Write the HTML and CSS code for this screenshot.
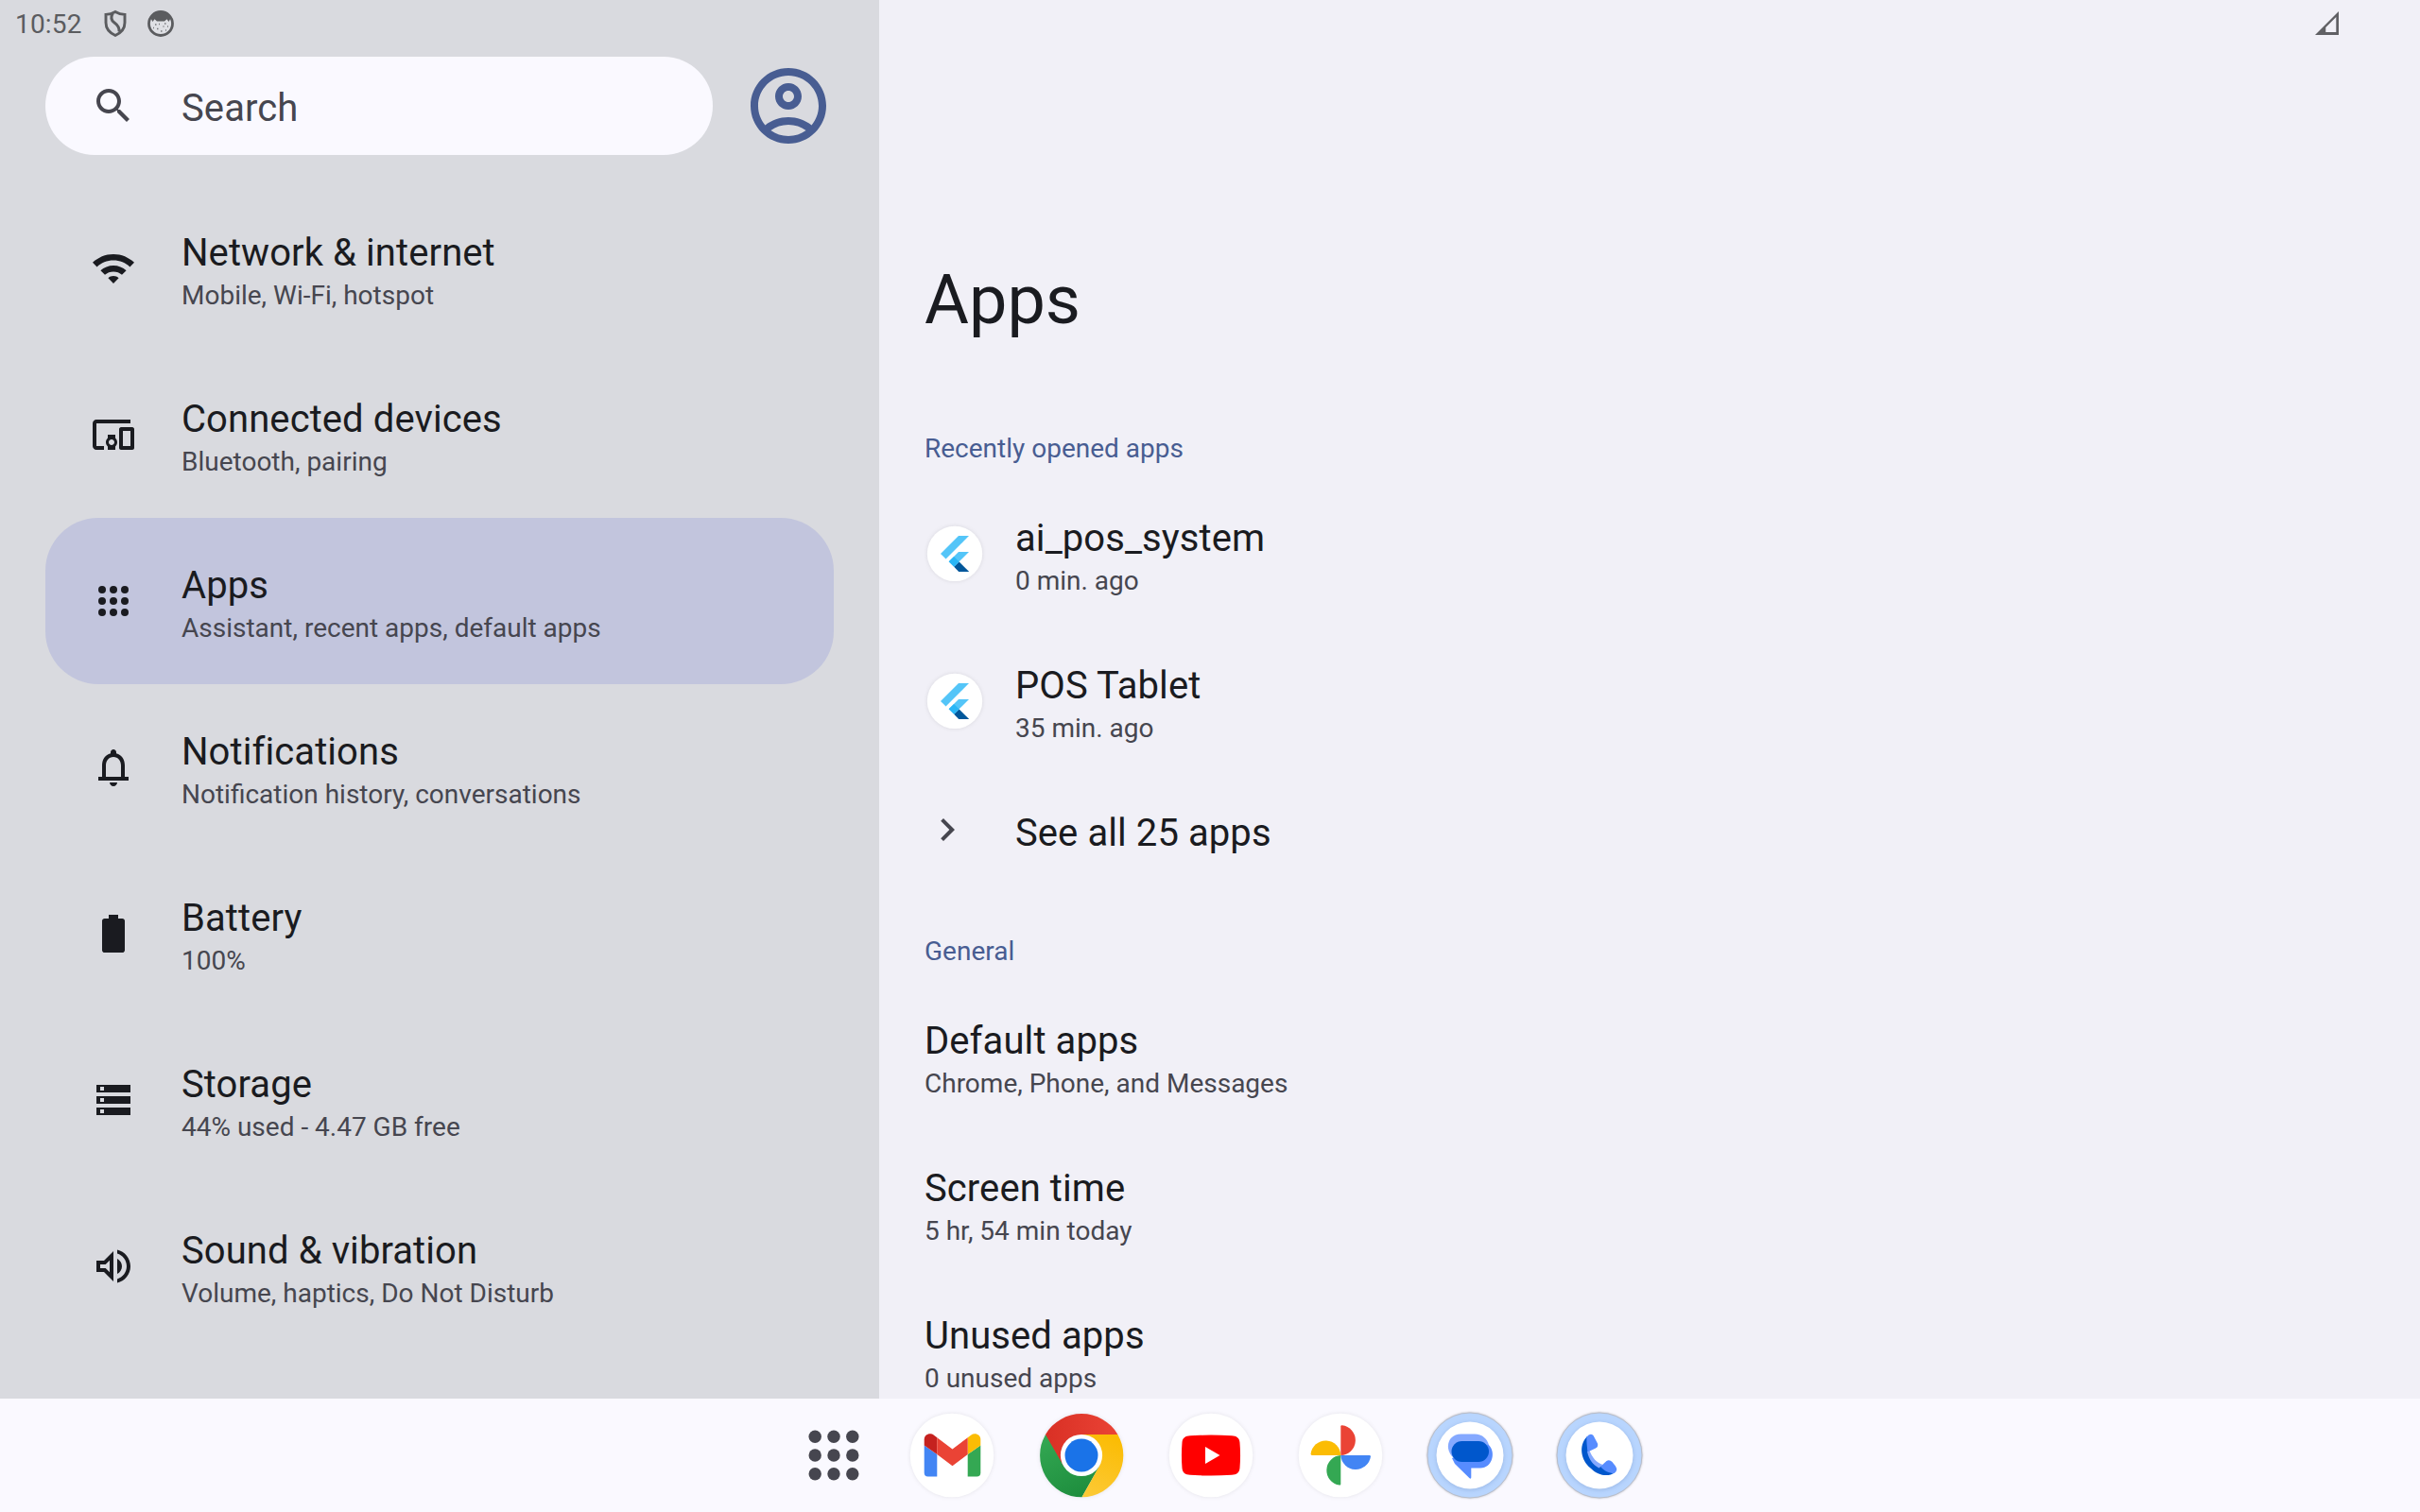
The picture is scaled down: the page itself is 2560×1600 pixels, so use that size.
FILE: index.html
```html
<!DOCTYPE html>
<html lang="en">
<head>
<meta charset="utf-8">
<title>Settings</title>
<link rel="stylesheet" href="styles.css">
</head>
<body>
<svg class="defs" aria-hidden="true">
  <defs>
    <linearGradient id="red" x1="0" y1="0" x2="1" y2="0"><stop offset="0" stop-color="#d93025"/><stop offset="1" stop-color="#ea4335"/></linearGradient>
    <linearGradient id="yellow" x1="0.3" y1="1" x2="0.6" y2="0"><stop offset="0" stop-color="#fcc934"/><stop offset="1" stop-color="#fbbc04"/></linearGradient>
    <linearGradient id="green" x1="0.6" y1="1" x2="0.1" y2="0"><stop offset="0" stop-color="#1e8e3e"/><stop offset="1" stop-color="#34a853"/></linearGradient>
    <symbol id="flutter" viewBox="0 0 64 64">
      <circle cx="32" cy="31.900" r="29.200" fill="#fff"/>
      <path d="M17 32 36 13H47L22.600 37.600z" fill="#54c5f8"/>
      <path d="M36 30H47L31.200 45.800 25.700 40.300z" fill="#54c5f8"/>
      <path d="M31.200 45.800 36.600 40.400 47.200 51H36.200z" fill="#01579b"/>
      <path d="M25.700 40.300 31.100 34.900 36.600 40.400 31.200 45.800z" fill="#29b6f6"/>
    </symbol>
  </defs>
</svg>
<div class="screen">
  <div class="panes">
    <aside class="sidebar">
      <header class="status">
        <span class="clock">10:52</span>
        <svg class="status-icon shield" viewBox="0 0 28 32"><path d="M14 3.400C11 5.200 7.500 6.200 4 6.400V15c0 6 3.500 10.500 10 13.500 6.500-3 10-7.500 10-13.500V6.400C20.500 6.200 17 5.200 14 3.400zM11.300 5.200C9 9 9.500 12.500 13 15c3.500 2.500 5.500 5 5 9.500"/></svg>
        <svg class="status-icon face" viewBox="0 0 30 30"><circle cx="15" cy="15" r="12.500" fill="#dfe0e5" stroke="#5b5c5f" stroke-width="2.800"/><path d="M4 8.500C9 0 21 0 26 8.500L23.500 13 21.500 10.200 19 12.500H11L8.500 10.200 6.500 13z" fill="#5b5c5f"/><path d="M9 16h1.500M13 15.500h1M19 15h1.500M22 18h1M7 19.500h1M11 20.500h1.500M17.500 18h1M15 23h1.500M20 22h1" stroke="#77787c" stroke-width="1.300"/></svg>
      </header>
      <div class="search-row">
        <div class="search">
          <svg class="icon search-icon" viewBox="0 0 24 24"><path d="M15.500 14h-.79l-.28-.27C15.410 12.590 16 11.110 16 9.500 16 5.910 13.090 3 9.500 3S3 5.910 3 9.500 5.910 16 9.500 16c1.610 0 3.090-.59 4.230-1.570l.27.28v.79l5 4.990L20.490 19l-4.990-5zm-6 0C7.010 14 5 11.990 5 9.500S7.010 5 9.500 5 14 7.010 14 9.500 11.990 14 9.500 14z"/></svg>
          <span>Search</span>
        </div>
        <svg class="avatar" viewBox="0 0 24 24"><path d="M12 2C6.480 2 2 6.480 2 12s4.480 10 10 10 10-4.480 10-10S17.520 2 12 2zM7.350 18.500C8.660 17.560 10.260 17 12 17s3.340.56 4.650 1.500C15.340 19.440 13.740 20 12 20s-3.340-.56-4.650-1.500zm10.790-1.380C16.450 15.800 14.320 15 12 15s-4.450.8-6.140 2.120C4.700 15.730 4 13.950 4 12c0-4.420 3.580-8 8-8s8 3.580 8 8c0 1.950-.7 3.730-1.860 5.120zM12 6c-1.930 0-3.500 1.570-3.500 3.500S10.070 13 12 13s3.500-1.570 3.500-3.500S13.930 6 12 6zm0 5c-.83 0-1.500-.67-1.500-1.500S11.170 8 12 8s1.500.67 1.500 1.500S12.830 11 12 11z"/></svg>
      </div>
      <nav class="menu">
        <a class="item"><svg class="icon" viewBox="0 0 24 24"><path d="M12 4.500C7.700 4.500 3.900 6.200 1 8.900l2.300 2.300C5.600 9.100 8.600 7.800 12 7.800s6.400 1.300 8.700 3.400L23 8.900C20.100 6.200 16.300 4.500 12 4.500zM5.200 13.100l2.300 2.300c1.200-1.100 2.800-1.700 4.500-1.700s3.300.6 4.500 1.700l2.300-2.300c-1.800-1.600-4.200-2.600-6.800-2.600s-5 1-6.800 2.600zM12 16c-1.100 0-2.100.4-2.800 1.100L12 20l2.800-2.900C14.100 16.400 13.100 16 12 16z"/></svg><div class="text"><b>Network &amp; internet</b><small>Mobile, Wi-Fi, hotspot</small></div></a>
        <a class="item"><svg class="icon" viewBox="0 0 24 24"><path d="M3 6h18V4H3c-1.100 0-2 .9-2 2v12c0 1.100.9 2 2 2h4v-2H3V6zm10 6H9v1.780c-.61.550-1 1.330-1 2.220s.39 1.670 1 2.220V20h4v-1.780c.61-.55 1-1.340 1-2.220s-.39-1.670-1-2.220V12zm-2 5.500c-.83 0-1.500-.67-1.500-1.500s.67-1.500 1.500-1.500 1.500.67 1.500 1.500-.67 1.500-1.500 1.500zM22 8h-6c-.5 0-1 .5-1 1v10c0 .5.500 1 1 1h6c.5 0 1-.5 1-1V9c0-.5-.5-1-1-1zm-1 10h-4v-8h4v8z"/></svg><div class="text"><b>Connected devices</b><small>Bluetooth, pairing</small></div></a>
        <a class="item selected"><svg class="icon" viewBox="0 0 24 24"><g><circle cx="6" cy="6" r="2"/><circle cx="12" cy="6" r="2"/><circle cx="18" cy="6" r="2"/><circle cx="6" cy="12" r="2"/><circle cx="12" cy="12" r="2"/><circle cx="18" cy="12" r="2"/><circle cx="6" cy="18" r="2"/><circle cx="12" cy="18" r="2"/><circle cx="18" cy="18" r="2"/></g></svg><div class="text"><b>Apps</b><small>Assistant, recent apps, default apps</small></div></a>
        <a class="item"><svg class="icon" viewBox="0 0 24 24"><path d="M18 17v-6c0-3.070-1.630-5.640-4.500-6.320V4c0-.83-.67-1.500-1.500-1.500s-1.500.67-1.500 1.500v.68C7.640 5.360 6 7.920 6 11v6H4v2h16v-2h-2zm-2 0H8v-6c0-2.480 1.510-4.500 4-4.500s4 2.020 4 4.500v6zm-4 5c1.100 0 2-.9 2-2h-4c0 1.100.9 2 2 2z"/></svg><div class="text"><b>Notifications</b><small>Notification history, conversations</small></div></a>
        <a class="item"><svg class="icon" viewBox="0 0 24 24"><path d="M16.700 4H14.500V2h-5v2H7.300C6.600 4 6 4.600 6 5.300v15.400c0 .7.600 1.300 1.300 1.300h9.400c.7 0 1.300-.6 1.300-1.300V5.300c0-.7-.6-1.300-1.300-1.300z"/></svg><div class="text"><b>Battery</b><small>100%</small></div></a>
        <a class="item"><svg class="icon" viewBox="0 0 24 24"><path fill-rule="evenodd" d="M3 20h18v-4H3v4zm2-3h2v2H5v-2zM3 4v4h18V4H3zm4 3H5V5h2v2zm-4 7h18v-4H3v4zm2-3h2v2H5v-2z"/></svg><div class="text"><b>Storage</b><small>44% used - 4.47 GB free</small></div></a>
        <a class="item"><svg class="icon" viewBox="0 0 24 24"><path d="M3 9v6h4l5 5V4L7 9H3zm7-.17v6.340L7.830 13H5v-2h2.830L10 8.830zM16.500 12c0-1.770-1.020-3.290-2.500-4.030v8.050c1.480-.73 2.500-2.250 2.500-4.020zM14 3.230v2.060c2.890.86 5 3.540 5 6.710s-2.110 5.850-5 6.710v2.060c4.010-.91 7-4.490 7-8.770s-2.990-7.860-7-8.770z"/></svg><div class="text"><b>Sound &amp; vibration</b><small>Volume, haptics, Do Not Disturb</small></div></a>
      </nav>
    </aside>
    <main class="content">
      <svg class="signal" viewBox="0 0 24 24"><path fill-rule="evenodd" d="M0 24H24V0zM10.800 21.200H21.400V5.700L10.800 16.400z"/></svg>
      <h1>Apps</h1>
      <h2>Recently opened apps</h2>
      <div class="pref"><svg class="app-icon" viewBox="0 0 64 64"><use href="#flutter"/></svg><div class="text"><b>ai_pos_system</b><small>0 min. ago</small></div></div>
      <div class="pref"><svg class="app-icon" viewBox="0 0 64 64"><use href="#flutter"/></svg><div class="text"><b>POS Tablet</b><small>35 min. ago</small></div></div>
      <div class="pref more"><svg class="chevron" viewBox="0 0 24 24"><path d="M10 6 8.590 7.410 13.170 12l-4.580 4.590L10 18l6-6z"/></svg><b>See all 25 apps</b></div>
      <h2>General</h2>
      <div class="pref"><div class="text"><b>Default apps</b><small>Chrome, Phone, and Messages</small></div></div>
      <div class="pref"><div class="text"><b>Screen time</b><small>5 hr, 54 min today</small></div></div>
      <div class="pref"><div class="text"><b>Unused apps</b><small>0 unused apps</small></div></div>
    </main>
  </div>
  <footer class="dock">
    <svg class="dock-icon launcher" viewBox="0 0 90 90"><g fill="#46464f"><circle cx="25.200" cy="25.200" r="6.700"/><circle cx="45" cy="25.200" r="6.700"/><circle cx="64.800" cy="25.200" r="6.700"/><circle cx="25.200" cy="45" r="6.700"/><circle cx="45" cy="45" r="6.700"/><circle cx="64.800" cy="45" r="6.700"/><circle cx="25.200" cy="64.800" r="6.700"/><circle cx="45" cy="64.800" r="6.700"/><circle cx="64.800" cy="64.800" r="6.700"/></g></svg>
    <svg class="dock-icon shadow" viewBox="0 0 90 90"><circle cx="45" cy="45" r="44.300" fill="#fff"/><path d="M15.700 34.500 29.300 44V67.500H19.700a4 4 0 0 1-4-4z" fill="#4285f4"/><path d="M61.700 44 75.300 34.500V63.500a4 4 0 0 1-4 4H61.700z" fill="#34a853"/><path d="M15.700 34.500V28.500C15.700 22.500 22 20.800 26 23.700L29.300 26.200V44z" fill="#c5221f"/><path d="M75.300 34.500V28.500C75.300 22.500 69 20.800 65 23.700L61.700 26.200V44z" fill="#fbbc04"/><path d="M29.300 26.200 45.500 38.500 61.700 26.200V44L45.500 56.300 29.300 44z" fill="#ea4335"/></svg>
    <svg class="dock-icon shadow" viewBox="0 0 90 90"><path d="M45 45 7 22.900A44.300 44.300 0 0 0 45.500 89.300L64.200 56z" fill="url(#green)"/><path d="M45 22.900H83.400A44.300 44.300 0 0 1 45.500 89.300L64.200 56z" fill="url(#yellow)"/><path d="M7 22.900A44.300 44.300 0 0 1 83.400 22.900H45L25.900 56z" fill="url(#red)"/><circle cx="45" cy="45" r="22.100" fill="#fff"/><circle cx="45" cy="45" r="17.500" fill="#1a73e8"/></svg>
    <svg class="dock-icon shadow" viewBox="0 0 90 90"><circle cx="45" cy="45" r="44.300" fill="#fff"/><path d="M23 24.200Q45 22.700 67 24.200C72 24.500 75.100 26.500 75.500 31.500Q76.600 45 75.500 58.500C75.100 63.500 72 65.500 67 65.800Q45 67.300 23 65.800C18 65.500 14.900 63.500 14.500 58.500Q13.400 45 14.500 31.500C14.900 26.500 18 24.500 23 24.200z" fill="#f00"/><path d="M39 36v18l15.500-9z" fill="#fff"/></svg>
    <svg class="dock-icon shadow" viewBox="0 0 90 90"><circle cx="45" cy="45" r="44.300" fill="#fff"/><path d="M45.300 45V14.500q0-1.300 1.400-1.200A15.900 15.900 0 0 1 45.300 45z" fill="#ea4335"/><path d="M45.300 45H75.700q1.300 0 1.200 1.400A15.900 15.900 0 0 1 45.300 45z" fill="#4285f4"/><path d="M45.300 45V75.400q0 1.300-1.400 1.200A15.900 15.900 0 0 1 45.300 45z" fill="#34a853"/><path d="M45.300 45H14.800q-1.300 0-1.200-1.400A15.900 15.900 0 0 1 45.300 45z" fill="#fbbc04"/></svg>
    <svg class="dock-icon ring" viewBox="0 0 90 90"><circle cx="45" cy="45" r="45" fill="#b8d5fe" stroke="#b7bcc8"/><circle class="inner" cx="45" cy="45" r="35.500" fill="#fff"/><path d="M35.500 22.500H50C58 22.500 64 28 65 35L32 52 25.500 45.500C18 36 22.500 22.500 35.500 22.500z" fill="#85a9ff"/><path d="M64.300 33.500C73 41 69 58.500 56 58.500H46.300V68.500Q46 70.500 44.300 69L29 54 26 48 64.300 33.500z" fill="#578cff"/><rect x="25.500" y="30" width="39.500" height="22" rx="11" fill="#0057cc"/></svg>
    <svg class="dock-icon ring" viewBox="0 0 90 90"><circle cx="45" cy="45" r="45" fill="#b8d5fe" stroke="#b7bcc8"/><circle class="inner" cx="45" cy="45" r="35.500" fill="#fff"/><path d="M32 25C22 35 26 51 35.500 58.500 44 67.500 55 67.500 61 63.500L46 56C41 53 36 47 33 41z" fill="#0057cc"/><path d="M32 41 34.500 40C37 47 42 53 48.500 55L44.500 58.500C38 55 34 50 32 41z" fill="#85a9ff"/><path d="M31.500 25.500Q35 21 38.500 24L43 32.500Q44 36 41 37.500L32.500 41.500C32 36 31 31 31.500 25.500z" fill="#578cff"/><path d="M46 57 52.500 51Q55.500 49 58.500 52L62 56.500Q65 61 60.500 64C55 64 50 61.500 46 57z" fill="#578cff"/></svg>
  </footer>
</div>
</body>
</html>
```

FILE: styles.css
```css
* { box-sizing: border-box; }
body { margin: 0; font-family: Roboto, "Liberation Sans", sans-serif; color: #1a1b20; }
.defs { position: absolute; width: 0; height: 0; }
.screen { width: 2560px; height: 1600px; overflow: hidden; display: flex; flex-direction: column; background: #faf9ff; }
.panes { height: 1480px; display: flex; overflow: hidden; }

.sidebar { width: 930px; background: #d9dadf; padding: 0 48px; flex: none; }
.status { height: 60px; margin-left: -32px; padding-bottom: 11px; display: flex; align-items: center; color: #5b5c5f; }
.clock { font-size: 28px; line-height: 33px; letter-spacing: 0.2px; width: 91px; padding-top: 1px; }
.status-icon { display: block; width: 30px; height: 32px; }
.shield { fill: none; stroke: #5b5c5f; stroke-width: 2.9; }
.face { width: 30px; height: 30px; margin-left: 18px; }

.search-row { display: flex; align-items: center; height: 104px; gap: 32px; }
.search { width: 706px; height: 104px; border-radius: 52px; background: #faf9ff; color: #46464f; font-size: 40px; line-height: 47px; letter-spacing: 0.1px; display: flex; align-items: center; gap: 48px; padding-left: 48px; }
.search span { padding-top: 5px; }
.avatar { width: 96px; height: 96px; flex: none; fill: #485d92; }

.icon { width: 48px; height: 48px; flex: none; fill: #1a1b20; display: block; }
.search-icon { fill: #46464f; }
.menu { padding-top: 32px; }
.item { display: flex; align-items: center; gap: 48px; height: 176px; padding-left: 48px; border-radius: 56px; }
.selected { background: #c2c5dd; }

.text { padding-top: 5px; }
b { display: block; font-weight: 400; font-size: 40px; line-height: 47px; white-space: nowrap; letter-spacing: 0.08px; }
small { display: block; font-size: 28px; line-height: 33px; margin-top: 5px; color: #46464f; white-space: nowrap; }

.content { flex: 1; background: #f1f0f7; padding-left: 48px; display: flex; flex-direction: column; align-items: flex-start; }
.signal { width: 25px; height: 25px; margin: 12px 0 0 1471px; fill: #606064; flex: none; }
h1 { margin: 239px 0 0; font-size: 72px; line-height: 84px; font-weight: 400; }
h2 { margin: 0; height: 33px; font-size: 28px; line-height: 33px; font-weight: 400; color: #485d92; }
h1 + h2 { margin-top: 98px; }
.pref { display: flex; align-items: center; height: 156px; flex: none; }
h2 + .pref { margin-top: 17px; }
.app-icon { width: 64px; height: 64px; margin-right: 32px; display: block; filter: drop-shadow(0 0 2px rgba(0, 0, 0, 0.1)); }
.chevron { width: 48px; height: 48px; margin-right: 48px; fill: #46464f; }
.more { height: 116px; }
.more b { padding-top: 7px; }
.more + h2 { margin-top: 54px; }

.dock { height: 120px; display: flex; align-items: center; gap: 47px; padding: 0 0 1px 836.5px; }
.dock-icon { width: 90px; height: 90px; overflow: visible; display: block; }
.launcher { margin-right: -12px; }
.shadow { filter: drop-shadow(0 0 2px rgba(0, 0, 0, 0.09)); }
.ring { filter: drop-shadow(0 0 1px rgba(0, 0, 0, 0.25)); }
.inner { filter: drop-shadow(0 1px 2px rgba(60, 90, 150, 0.25)); }
```
